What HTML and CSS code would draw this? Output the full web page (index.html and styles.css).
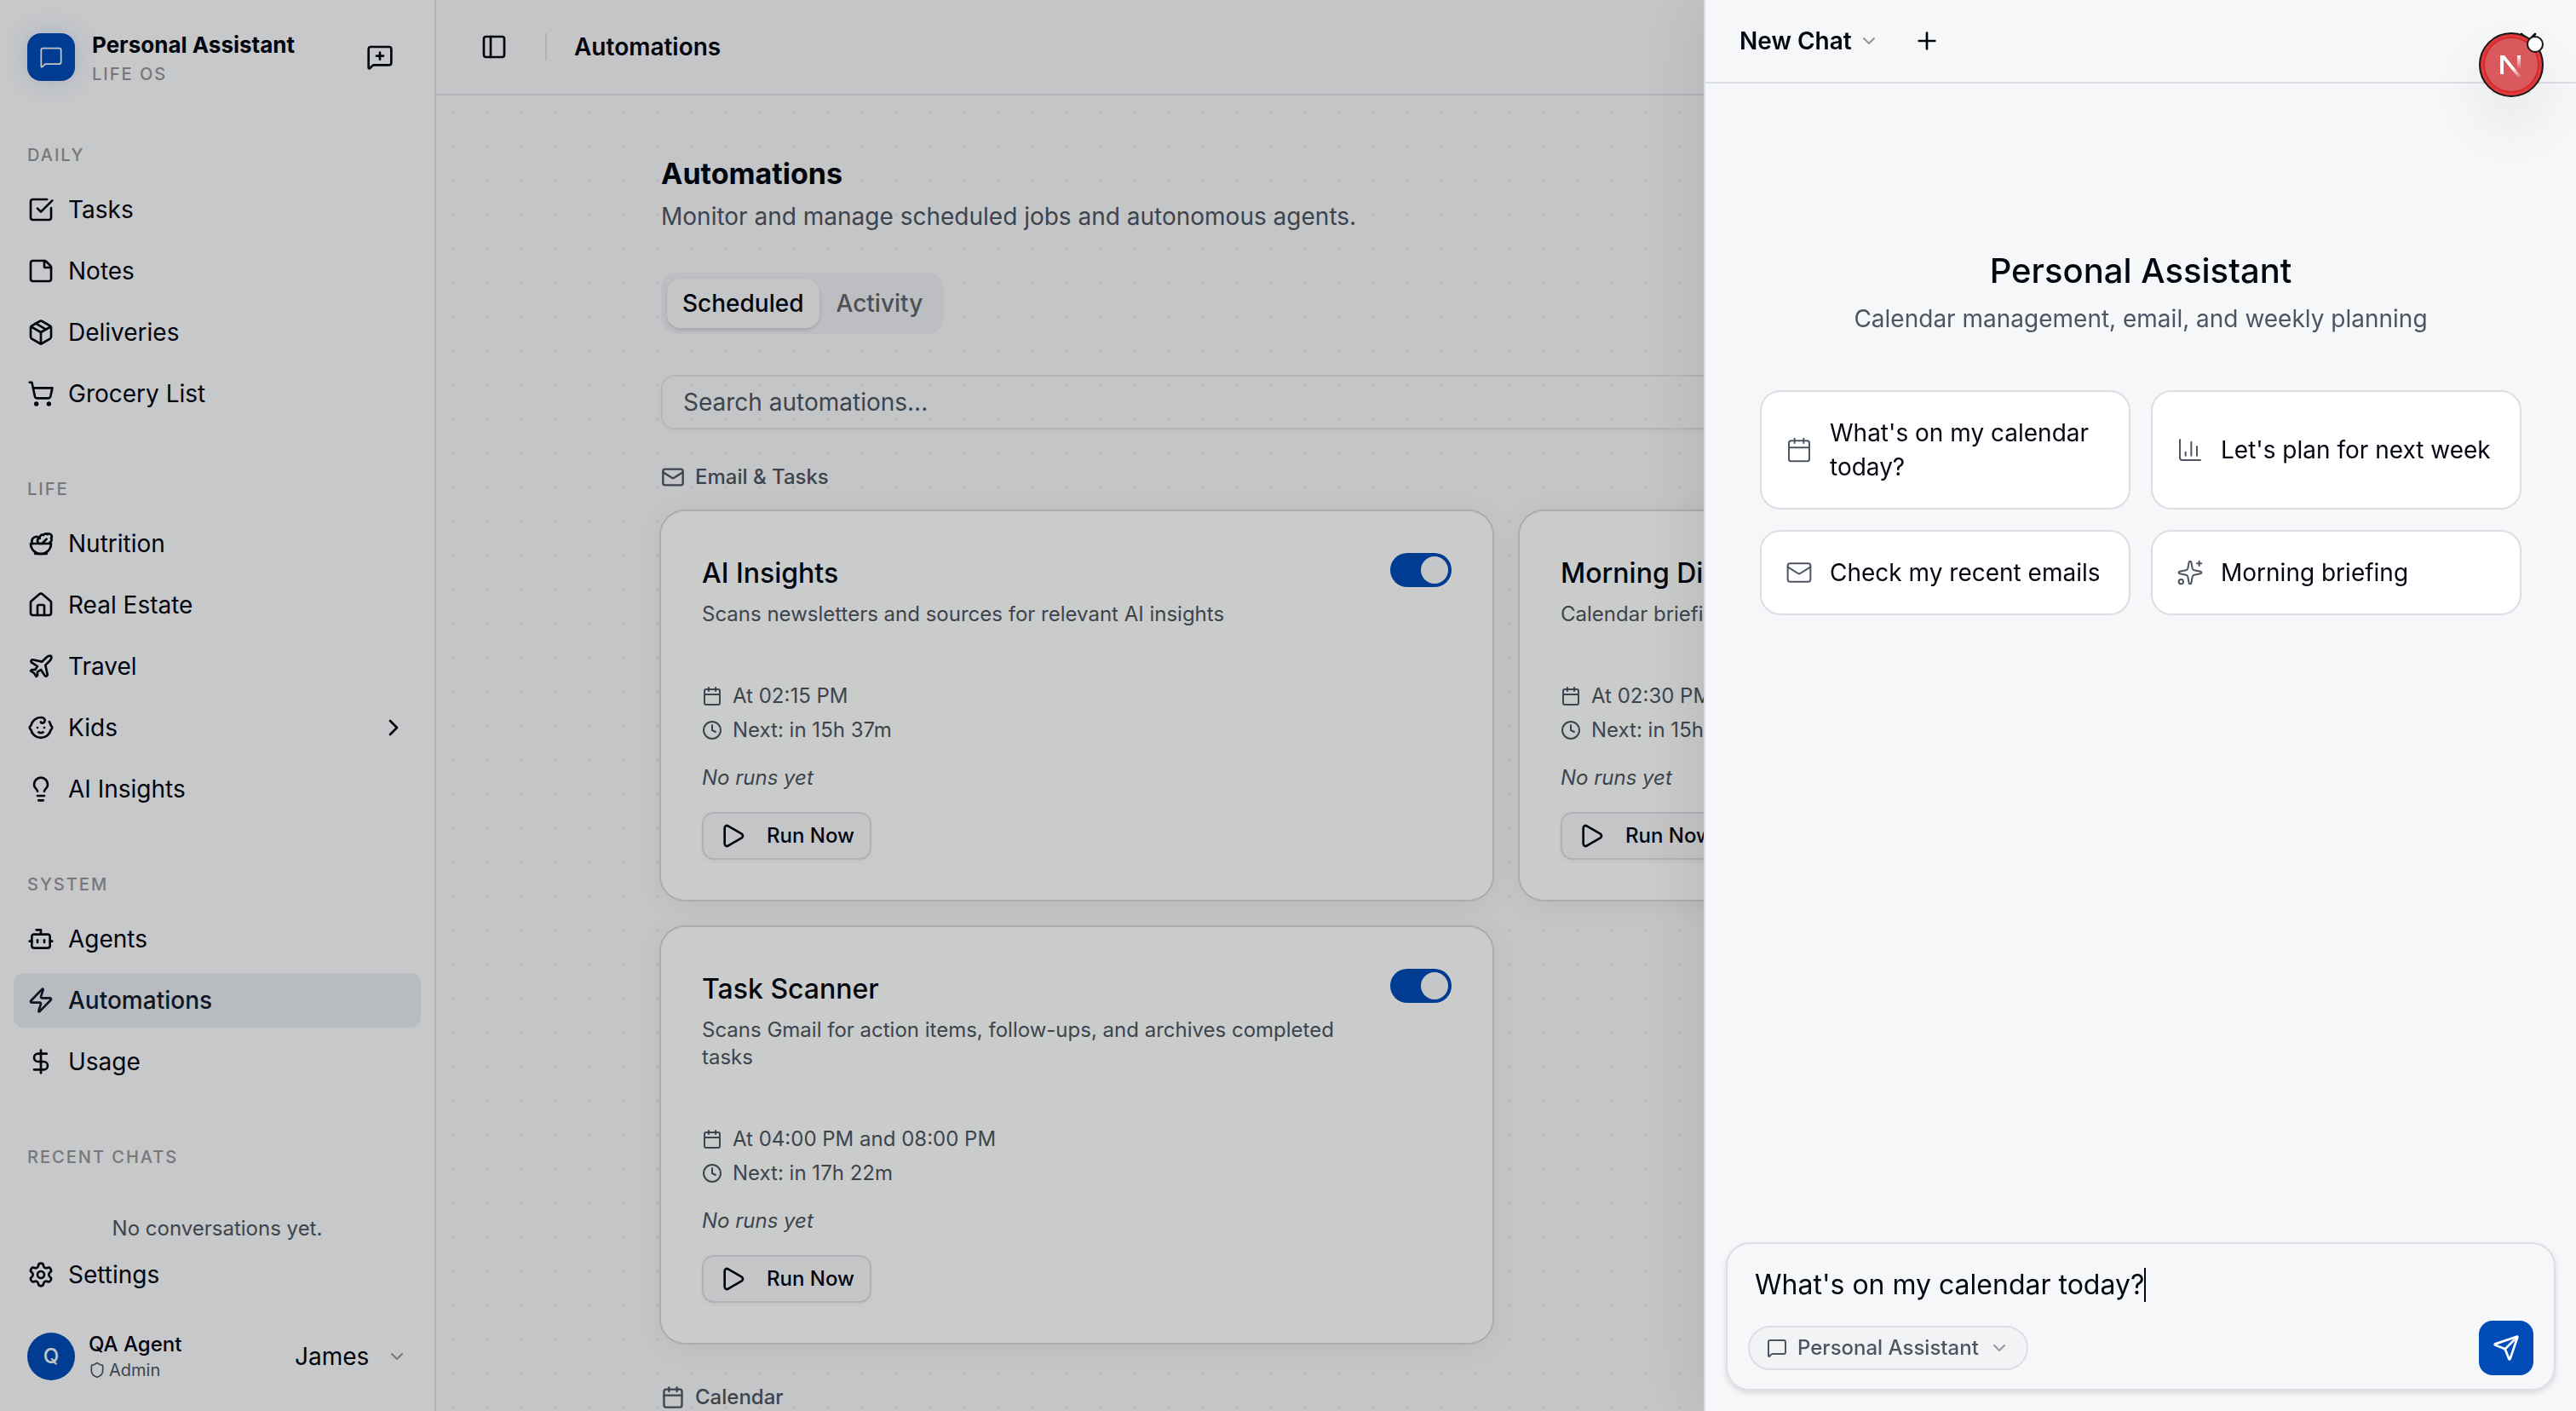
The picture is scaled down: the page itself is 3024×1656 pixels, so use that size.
FILE: index.html
```
<!DOCTYPE html>
<html lang="en">
<head>
    <meta charset="UTF-8">
    <meta name="viewport" content="width=device-width, initial-scale=1.0">
    <title>Automations - Personal Assistant</title>
    <link rel="stylesheet" href="styles.css">
</head>
<body>
    <!-- icon sprite -->
    <svg class="sprite" aria-hidden="true">
        <symbol id="i-message" viewBox="0 0 24 24"><path d="M22 17a2 2 0 0 1-2 2H6.828a2 2 0 0 0-1.414.586l-2.202 2.202A.71.71 0 0 1 2 21.286V5a2 2 0 0 1 2-2h16a2 2 0 0 1 2 2z"/></symbol>
        <symbol id="i-message-plus" viewBox="0 0 24 24"><path d="M22 17a2 2 0 0 1-2 2H6.828a2 2 0 0 0-1.414.586l-2.202 2.202A.71.71 0 0 1 2 21.286V5a2 2 0 0 1 2-2h16a2 2 0 0 1 2 2z"/><path d="M12 8v6"/><path d="M9 11h6"/></symbol>
        <symbol id="i-check" viewBox="0 0 24 24"><path d="M21 10.656V19a2 2 0 0 1-2 2H5a2 2 0 0 1-2-2V5a2 2 0 0 1 2-2h12.344"/><path d="m9 11 3 3L22 4"/></symbol>
        <symbol id="i-note" viewBox="0 0 24 24"><path d="M21 9a2.4 2.4 0 0 0-.706-1.706l-3.588-3.588A2.4 2.4 0 0 0 15 3H5a2 2 0 0 0-2 2v14a2 2 0 0 0 2 2h14a2 2 0 0 0 2-2z"/><path d="M15 3v5a1 1 0 0 0 1 1h5"/></symbol>
        <symbol id="i-package" viewBox="0 0 24 24"><path d="M11 21.73a2 2 0 0 0 2 0l7-4A2 2 0 0 0 21 16V8a2 2 0 0 0-1-1.73l-7-4a2 2 0 0 0-2 0l-7 4A2 2 0 0 0 3 8v8a2 2 0 0 0 1 1.73z"/><path d="M12 22V12"/><path d="M3.29 7 12 12l8.71-5"/><path d="m7.5 4.27 9 5.15"/></symbol>
        <symbol id="i-cart" viewBox="0 0 24 24"><circle cx="8" cy="21" r="1"/><circle cx="19" cy="21" r="1"/><path d="M2.05 2.05h2l2.66 12.42a2 2 0 0 0 2 1.58h9.78a2 2 0 0 0 1.95-1.57l1.65-7.43H5.12"/></symbol>
        <symbol id="i-salad" viewBox="0 0 24 24"><path d="M7 21h10"/><path d="M12 21a9 9 0 0 0 9-9H3a9 9 0 0 0 9 9Z"/><path d="M11.38 12a2.4 2.4 0 0 1-.4-4.77 2.4 2.4 0 0 1 3.2-2.77 2.4 2.4 0 0 1 3.47-.63 2.4 2.4 0 0 1 3.37 3.37 2.4 2.4 0 0 1-1.1 3.7 2.51 2.51 0 0 1 .03 1.1"/><path d="m13 12 4-4"/><path d="M10.9 7.25A3.99 3.99 0 0 0 4 10c0 .73.2 1.41.54 2"/></symbol>
        <symbol id="i-house" viewBox="0 0 24 24"><path d="M15 21v-8a1 1 0 0 0-1-1h-4a1 1 0 0 0-1 1v8"/><path d="M3 10a2 2 0 0 1 .709-1.528l7-5.999a2 2 0 0 1 2.582 0l7 5.999A2 2 0 0 1 21 10v9a2 2 0 0 1-2 2H5a2 2 0 0 1-2-2z"/></symbol>
        <symbol id="i-plane" viewBox="0 0 24 24"><path d="M17.8 19.2 16 11l3.5-3.5C21 6 21.5 4 21 3c-1-.5-3 0-4.5 1.5L13 8 4.8 6.2c-.5-.1-.9.1-1.1.5l-.3.5c-.2.5-.1 1 .3 1.3L9 12l-2 3H4l-1 1 3 2 2 3 1-1v-3l3-2 3.5 5.3c.3.4.8.5 1.3.3l.5-.2c.4-.3.6-.7.5-1.2z"/></symbol>
        <symbol id="i-baby" viewBox="0 0 24 24"><path d="M10 16c.5.3 1.2.5 2 .5s1.5-.2 2-.5"/><path d="M15 12h.01"/><path d="M19.38 6.813A9 9 0 0 1 20.8 10.2a2 2 0 0 1 0 3.6 9 9 0 0 1-17.6 0 2 2 0 0 1 0-3.6A9 9 0 0 1 12 3c2 0 3.5 1.1 3.5 2.5s-.9 2.5-2 2.5c-.8 0-1.5-.4-1.5-1"/><path d="M9 12h.01"/></symbol>
        <symbol id="i-bulb" viewBox="0 0 24 24"><path d="M15 14c.2-1 .7-1.7 1.5-2.5 1-.9 1.5-2.2 1.5-3.5A6 6 0 0 0 6 8c0 1 .2 2.2 1.5 3.5.7.7 1.3 1.5 1.5 2.5"/><path d="M9 18h6"/><path d="M10 22h4"/></symbol>
        <symbol id="i-bot" viewBox="0 0 24 24"><path d="M12 8V4H8"/><rect width="16" height="12" x="4" y="8" rx="2"/><path d="M2 14h2"/><path d="M20 14h2"/><path d="M15 13v2"/><path d="M9 13v2"/></symbol>
        <symbol id="i-zap" viewBox="0 0 24 24"><path d="M4 14a1 1 0 0 1-.78-1.63l9.9-10.2a.5.5 0 0 1 .86.46l-1.92 6.02A1 1 0 0 0 13 10h7a1 1 0 0 1 .78 1.63l-9.9 10.2a.5.5 0 0 1-.86-.46l1.92-6.02A1 1 0 0 0 11 14z"/></symbol>
        <symbol id="i-dollar" viewBox="0 0 24 24"><path d="M12 2v20"/><path d="M17 5H9.5a3.5 3.5 0 0 0 0 7h5a3.5 3.5 0 0 1 0 7H6"/></symbol>
        <symbol id="i-settings" viewBox="0 0 24 24"><path d="M9.671 4.136a2.34 2.34 0 0 1 4.659 0 2.34 2.34 0 0 0 3.319 1.915 2.34 2.34 0 0 1 2.33 4.033 2.34 2.34 0 0 0 0 3.831 2.34 2.34 0 0 1-2.33 4.033 2.34 2.34 0 0 0-3.319 1.915 2.34 2.34 0 0 1-4.659 0 2.34 2.34 0 0 0-3.32-1.915 2.34 2.34 0 0 1-2.33-4.033 2.34 2.34 0 0 0 0-3.831A2.34 2.34 0 0 1 6.35 6.051a2.34 2.34 0 0 0 3.319-1.915"/><circle cx="12" cy="12" r="3"/></symbol>
        <symbol id="i-shield" viewBox="0 0 24 24"><path d="M20 13c0 5-3.5 7.5-7.66 8.95a1 1 0 0 1-.67-.01C7.5 20.5 4 18 4 13V6a1 1 0 0 1 1-1c2 0 4.5-1.2 6.24-2.72a1.17 1.17 0 0 1 1.52 0C14.51 3.81 17 5 19 5a1 1 0 0 1 1 1z"/></symbol>
        <symbol id="i-panel" viewBox="0 0 24 24"><rect width="18" height="18" x="3" y="3" rx="2"/><path d="M9 3v18"/></symbol>
        <symbol id="i-mail" viewBox="0 0 24 24"><path d="m22 7-8.991 5.727a2 2 0 0 1-2.009 0L2 7"/><rect x="2" y="4" width="20" height="16" rx="2"/></symbol>
        <symbol id="i-calendar" viewBox="0 0 24 24"><path d="M8 2v4"/><path d="M16 2v4"/><rect width="18" height="18" x="3" y="4" rx="2"/><path d="M3 10h18"/></symbol>
        <symbol id="i-clock" viewBox="0 0 24 24"><circle cx="12" cy="12" r="10"/><path d="M12 6v6l4 2"/></symbol>
        <symbol id="i-play" viewBox="0 0 24 24"><path d="M5 5a2 2 0 0 1 3.008-1.728l11.997 6.998a2 2 0 0 1 .003 3.458l-12 7A2 2 0 0 1 5 19z"/></symbol>
        <symbol id="i-chart" viewBox="0 0 24 24"><path d="M3 3v16a2 2 0 0 0 2 2h16"/><path d="M18 17V9"/><path d="M13 17V5"/><path d="M8 17v-3"/></symbol>
        <symbol id="i-sparkles" viewBox="0 0 24 24"><path d="M11.017 2.814a1 1 0 0 1 1.966 0l1.051 5.558a2 2 0 0 0 1.594 1.594l5.558 1.051a1 1 0 0 1 0 1.966l-5.558 1.051a2 2 0 0 0-1.594 1.594l-1.051 5.558a1 1 0 0 1-1.966 0l-1.051-5.558a2 2 0 0 0-1.594-1.594l-5.558-1.051a1 1 0 0 1 0-1.966l5.558-1.051a2 2 0 0 0 1.594-1.594z"/><path d="M20 2v4"/><path d="M22 4h-4"/><circle cx="4" cy="20" r="2"/></symbol>
        <symbol id="i-send" viewBox="0 0 24 24"><path d="M14.536 21.686a.5.5 0 0 0 .937-.024l6.5-19a.496.496 0 0 0-.635-.635l-19 6.5a.5.5 0 0 0-.024.937l7.93 3.18a2 2 0 0 1 1.112 1.11z"/><path d="m21.854 2.147-10.94 10.939"/></symbol>
        <symbol id="i-right" viewBox="0 0 24 24"><path d="m9 18 6-6-6-6"/></symbol>
        <symbol id="i-down" viewBox="0 0 24 24"><path d="m6 9 6 6 6-6"/></symbol>
        <symbol id="i-plus" viewBox="0 0 24 24"><path d="M5 12h14"/><path d="M12 5v14"/></symbol>
        <symbol id="i-x" viewBox="0 0 24 24"><path d="M18 6 6 18"/><path d="m6 6 12 12"/></symbol>
    </svg>

    <div class="app">
        <aside class="sidebar">
            <div class="brand">
                <span class="brand-logo"><svg class="icon icon-md thin"><use href="#i-message"/></svg></span>
                <div class="brand-text">
                    <strong>Personal Assistant</strong>
                    <span>LIFE OS</span>
                </div>
                <button class="icon-btn" type="button" aria-label="New chat"><svg class="icon"><use href="#i-message-plus"/></svg></button>
            </div>

            <nav class="nav">
                <div class="nav-group">
                    <h2>DAILY</h2>
                    <a href="#"><svg class="icon"><use href="#i-check"/></svg>Tasks</a>
                    <a href="#"><svg class="icon"><use href="#i-note"/></svg>Notes</a>
                    <a href="#"><svg class="icon"><use href="#i-package"/></svg>Deliveries</a>
                    <a href="#"><svg class="icon"><use href="#i-cart"/></svg>Grocery List</a>
                </div>
                <div class="nav-group">
                    <h2>LIFE</h2>
                    <a href="#"><svg class="icon"><use href="#i-salad"/></svg>Nutrition</a>
                    <a href="#"><svg class="icon"><use href="#i-house"/></svg>Real Estate</a>
                    <a href="#"><svg class="icon"><use href="#i-plane"/></svg>Travel</a>
                    <a href="#"><svg class="icon"><use href="#i-baby"/></svg>Kids<svg class="icon nav-arrow"><use href="#i-right"/></svg></a>
                    <a href="#"><svg class="icon"><use href="#i-bulb"/></svg>AI Insights</a>
                </div>
                <div class="nav-group">
                    <h2>SYSTEM</h2>
                    <a href="#"><svg class="icon"><use href="#i-bot"/></svg>Agents</a>
                    <a href="#" class="active"><svg class="icon"><use href="#i-zap"/></svg>Automations</a>
                    <a href="#"><svg class="icon"><use href="#i-dollar"/></svg>Usage</a>
                </div>
                <div class="nav-group">
                    <h2>RECENT CHATS</h2>
                    <p class="nav-empty">No conversations yet.</p>
                </div>
            </nav>

            <div class="sidebar-footer">
                <a href="#"><svg class="icon"><use href="#i-settings"/></svg>Settings</a>
                <div class="user">
                    <span class="avatar">Q</span>
                    <div class="user-text">
                        <span class="user-name">QA Agent</span>
                        <span class="user-role"><svg class="icon icon-xs"><use href="#i-shield"/></svg>Admin</span>
                    </div>
                    <label class="persona">
                        <select aria-label="Person"><option>James</option></select>
                        <svg class="icon icon-sm muted"><use href="#i-down"/></svg>
                    </label>
                </div>
            </div>
        </aside>

        <main class="main">
            <header class="topbar">
                <button class="icon-btn" type="button" aria-label="Toggle sidebar"><svg class="icon"><use href="#i-panel"/></svg></button>
                <span class="divider"></span>
                <span class="crumb">Automations</span>
            </header>

            <div class="canvas">
                <div class="content">
                    <h1>Automations</h1>
                    <p class="lead">Monitor and manage scheduled jobs and autonomous agents.</p>

                    <div class="tabs" role="tablist">
                        <button type="button" role="tab" aria-selected="true">Scheduled</button>
                        <button type="button" role="tab" aria-selected="false">Activity</button>
                    </div>

                    <input class="search" type="search" placeholder="Search automations..." aria-label="Search automations">

                    <h2 class="section-title"><svg class="icon icon-md"><use href="#i-mail"/></svg>Email &amp; Tasks</h2>
                    <div class="cards">
                        <article class="card">
                            <div class="card-head">
                                <div class="card-text">
                                    <h3>AI Insights</h3>
                                    <p>Scans newsletters and sources for relevant AI insights</p>
                                </div>
                                <input class="switch" type="checkbox" role="switch" aria-label="AI Insights enabled" checked>
                            </div>
                            <ul class="card-meta">
                                <li><svg class="icon icon-sm"><use href="#i-calendar"/></svg>At 02:15 PM</li>
                                <li><svg class="icon icon-sm"><use href="#i-clock"/></svg>Next: in 15h 37m</li>
                            </ul>
                            <p class="card-runs">No runs yet</p>
                            <button class="run-btn" type="button"><svg class="icon"><use href="#i-play"/></svg>Run Now</button>
                        </article>

                        <article class="card">
                            <div class="card-head">
                                <div class="card-text">
                                    <h3>Morning Digest</h3>
                                    <p>Calendar briefing and priorities for the day</p>
                                </div>
                                <input class="switch" type="checkbox" role="switch" aria-label="Morning Digest enabled" checked>
                            </div>
                            <ul class="card-meta">
                                <li><svg class="icon icon-sm"><use href="#i-calendar"/></svg>At 02:30 PM</li>
                                <li><svg class="icon icon-sm"><use href="#i-clock"/></svg>Next: in 15h 52m</li>
                            </ul>
                            <p class="card-runs">No runs yet</p>
                            <button class="run-btn" type="button"><svg class="icon"><use href="#i-play"/></svg>Run Now</button>
                        </article>

                        <article class="card">
                            <div class="card-head">
                                <div class="card-text">
                                    <h3>Task Scanner</h3>
                                    <p>Scans Gmail for action items, follow-ups, and archives completed tasks</p>
                                </div>
                                <input class="switch" type="checkbox" role="switch" aria-label="Task Scanner enabled" checked>
                            </div>
                            <ul class="card-meta">
                                <li><svg class="icon icon-sm"><use href="#i-calendar"/></svg>At 04:00 PM and 08:00 PM</li>
                                <li><svg class="icon icon-sm"><use href="#i-clock"/></svg>Next: in 17h 22m</li>
                            </ul>
                            <p class="card-runs">No runs yet</p>
                            <button class="run-btn" type="button"><svg class="icon"><use href="#i-play"/></svg>Run Now</button>
                        </article>
                    </div>

                    <h2 class="section-title section-next"><svg class="icon icon-md"><use href="#i-calendar"/></svg>Calendar</h2>
                </div>
            </div>
        </main>
    </div>

    <div class="overlay"></div>

    <section class="chat" aria-label="Chat">
        <header class="chat-head">
            <button class="chat-title" type="button">New Chat<svg class="icon icon-sm muted"><use href="#i-down"/></svg></button>
            <button class="icon-btn" type="button" aria-label="Start new chat"><svg class="icon"><use href="#i-plus"/></svg></button>
            <button class="icon-btn chat-close" type="button" aria-label="Close"><svg class="icon"><use href="#i-x"/></svg></button>
        </header>

        <div class="chat-body">
            <h2>Personal Assistant</h2>
            <p>Calendar management, email, and weekly planning</p>
            <div class="prompts">
                <button type="button"><svg class="icon thin"><use href="#i-calendar"/></svg><span>What's on my calendar today?</span></button>
                <button type="button"><svg class="icon thin"><use href="#i-chart"/></svg><span>Let's plan for next week</span></button>
                <button type="button"><svg class="icon thin"><use href="#i-mail"/></svg><span>Check my recent emails</span></button>
                <button type="button"><svg class="icon thin"><use href="#i-sparkles"/></svg><span>Morning briefing</span></button>
            </div>
        </div>

        <form class="composer">
            <div class="composer-line">
                <input type="text" value="What's on my calendar today?" aria-label="Message">
                <span class="caret"></span>
            </div>
            <div class="composer-bar">
                <button class="agent-pill" type="button"><svg class="icon icon-sm"><use href="#i-message"/></svg>Personal Assistant<svg class="icon icon-sm muted"><use href="#i-down"/></svg></button>
                <button class="send" type="button" aria-label="Send"><svg class="icon"><use href="#i-send"/></svg></button>
            </div>
        </form>
    </section>

    <!-- dev tools badge -->
    <button class="dev-badge" type="button" aria-label="Open dev tools">
        <svg viewBox="0 0 40 40" width="40" height="40">
            <defs>
                <linearGradient id="fade-a" x1="22" y1="24" x2="31" y2="36" gradientUnits="userSpaceOnUse"><stop stop-color="#fff"/><stop offset="1" stop-color="#fff" stop-opacity="0"/></linearGradient>
                <linearGradient id="fade-b" x1="0" y1="9" x2="0" y2="25" gradientUnits="userSpaceOnUse"><stop stop-color="#fff"/><stop offset="1" stop-color="#fff" stop-opacity="0"/></linearGradient>
            </defs>
            <path d="M9 31V9" stroke="#fff" stroke-width="4"/>
            <path d="M7 9h5l20 25-3 2z" fill="url(#fade-a)"/>
            <path d="M29 9V25" stroke="url(#fade-b)" stroke-width="4"/>
        </svg>
        <span class="dev-dot"></span>
    </button>
</body>
</html>
```

FILE: styles.css
```
:root{
    --text: #030712;
    --muted: #4d5562;
    --faint: #94969b;
    --line: #dcdee5;
    --bg: #f6f7f9;
    --side: #f9fafc;
    --card: #fdfffe;
    --primary: #024cb8;
}

*{
    box-sizing: border-box;
}

body{
    margin: 0;
    background-color: var(--bg);
    color: var(--text);
    font-family: Inter, "Liberation Sans", sans-serif;
    font-size: 28px;
    line-height: 40px;
    overflow: hidden;
}

h1, h2, h3, p, ul{
    margin: 0;
    padding: 0;
}

a{
    color: inherit;
    text-decoration: none;
}

button, input, select{
    font: inherit;
    color: inherit;
    margin: 0;
    padding: 0;
    border: 0;
    background: none;
}

/* icons */
.sprite{
    display: none;
}

.icon{
    width: 32px;
    height: 32px;
    flex: none;
    fill: none;
    stroke: currentColor;
    stroke-width: 2;
    stroke-linecap: round;
    stroke-linejoin: round;
}

.icon-md{
    width: 28px;
    height: 28px;
}

.icon-sm{
    width: 24px;
    height: 24px;
}

.icon-xs{
    width: 20px;
    height: 20px;
}

.thin{
    stroke-width: 1.5;
}

.muted{
    color: var(--faint);
}

.icon-btn{
    display: flex;
    align-items: center;
    justify-content: center;
    width: 56px;
    height: 56px;
}

/* layout */
.app{
    display: flex;
    height: 100vh;
}

.sidebar{
    display: flex;
    flex-direction: column;
    flex: none;
    width: 512px;
    background-color: var(--side);
    border-right: 2px solid var(--line);
}

.brand{
    display: flex;
    align-items: center;
    gap: 20px;
    height: 134px;
    padding: 0 36px 0 32px;
}

.brand-logo{
    display: flex;
    align-items: center;
    justify-content: center;
    width: 56px;
    height: 56px;
    border-radius: 16px;
    color: #f6f7f9;
    background-color: var(--primary);
    box-shadow: 0 0 32px rgba(2, 76, 184, .16);
}

.brand-text{
    display: flex;
    flex-direction: column;
    flex: 1;
    padding-top: 4px;
}

.brand-text strong{
    font-size: 26px;
    font-weight: 700;
    line-height: 36px;
}

.brand-text span{
    color: var(--faint);
    font-size: 20px;
    font-weight: 500;
    letter-spacing: 2px;
    line-height: 32px;
}

.nav{
    display: flex;
    flex-direction: column;
    flex: 1;
    gap: 48px;
    min-height: 0;
    padding: 16px 16px 0;
}

.nav-group{
    display: flex;
    flex-direction: column;
    gap: 8px;
}

.nav-group h2{
    height: 56px;
    padding: 0 16px;
    color: var(--faint);
    font-size: 20px;
    font-weight: 500;
    letter-spacing: 2px;
    line-height: 64px;
}

.nav-group a, .sidebar-footer a{
    display: flex;
    align-items: center;
    gap: 16px;
    height: 64px;
    padding: 0 16px;
    border-radius: 12px;
}

.nav-group a.active{
    color: #111c2f;
    background-color: #e7ebf1;
    font-weight: 500;
}

.nav-arrow{
    margin-left: auto;
}

.nav-empty{
    padding-top: 32px;
    color: var(--muted);
    font-size: 24px;
    text-align: center;
}

.sidebar-footer{
    display: flex;
    flex-direction: column;
    gap: 20px;
    padding: 0 16px 20px;
}

.user{
    display: flex;
    align-items: center;
    gap: 16px;
    height: 88px;
    padding: 0 16px;
}

.avatar{
    display: flex;
    align-items: center;
    justify-content: center;
    width: 56px;
    height: 56px;
    border-radius: 50%;
    color: #f6f7f9;
    background-color: var(--primary);
    font-size: 24px;
    font-weight: 500;
}

.user-text{
    display: flex;
    flex-direction: column;
    flex: 1;
}

.user-name{
    font-size: 24px;
    font-weight: 500;
    line-height: 32px;
}

.user-role{
    display: flex;
    align-items: center;
    gap: 4px;
    color: var(--muted);
    font-size: 20px;
    line-height: 28px;
}

.persona{
    display: flex;
    align-items: center;
    gap: 20px;
}

.persona select{
    appearance: none;
}

/* main */
.main{
    display: flex;
    flex-direction: column;
    flex: 1;
    min-width: 0;
}

.topbar{
    display: flex;
    align-items: center;
    flex: none;
    gap: 32px;
    height: 112px;
    padding: 0 40px;
    border-bottom: 2px solid var(--line);
}

.divider{
    width: 2px;
    height: 32px;
    background-color: var(--line);
}

.crumb{
    font-weight: 600;
}

.canvas{
    flex: 1;
    min-height: 0;
    overflow: hidden;
    background-image: radial-gradient(circle, #e6e8ec 2px, transparent 2px);
    background-size: 40px 40px;
}

.content{
    max-width: 2048px;
    margin: 0 auto;
    padding: 64px 32px;
}

h1{
    font-size: 34px;
    font-weight: 700;
    line-height: 56px;
}

.lead{
    color: var(--muted);
    line-height: 44px;
}

.tabs{
    display: inline-flex;
    gap: 2px;
    height: 72px;
    margin-top: 44px;
    padding: 7px;
    border-radius: 20px;
    background-color: #eceef2;
}

.tabs button{
    padding: 0 18px;
    border-radius: 16px;
    color: #626469;
    font-weight: 500;
}

.tabs button[aria-selected="true"]{
    color: var(--text);
    background-color: var(--bg);
    box-shadow: 0 2px 4px rgba(0, 0, 0, .14);
}

.search{
    display: block;
    width: 100%;
    height: 64px;
    margin-top: 48px;
    padding: 0 24px;
    border: 2px solid #e3e4e7;
    border-radius: 16px;
    box-shadow: 0 2px 4px rgba(0, 0, 0, .05);
}

.search::placeholder{
    color: var(--muted);
    opacity: 1;
}

.section-title{
    display: flex;
    align-items: center;
    gap: 12px;
    margin: 40px 0 24px;
    color: var(--muted);
    font-size: 24px;
    font-weight: 500;
    line-height: 32px;
}

.section-next{
    margin-top: 48px;
}

.cards{
    display: grid;
    grid-template-columns: 1fr 1fr;
    gap: 32px;
}

.card{
    display: flex;
    flex-direction: column;
    align-items: flex-start;
    padding: 49px 48px 47px;
    border-radius: 28px;
    background-color: var(--card);
    box-shadow: 0 0 0 2px #d6d8dd, 0 4px 32px rgba(0, 0, 0, .07);
    font-size: 24px;
    line-height: 32px;
}

.card-head{
    display: flex;
    align-items: flex-start;
    justify-content: space-between;
    gap: 24px;
    width: 100%;
}

.card h3{
    margin-bottom: 8px;
    font-size: 32px;
    font-weight: 500;
    line-height: 48px;
}

.card p, .card-meta{
    color: var(--muted);
}

/* on/off switch */
.switch{
    display: flex;
    flex: none;
    justify-content: flex-end;
    width: 72px;
    height: 40px;
    padding: 4px;
    border-radius: 20px;
    appearance: none;
    background-color: var(--primary);
}

.switch::before{
    content: "";
    width: 32px;
    height: 32px;
    border-radius: 50%;
    background-color: var(--bg);
}

.card-meta{
    display: flex;
    flex-direction: column;
    gap: 8px;
    margin: 64px 0 24px;
    list-style: none;
}

.card-meta li{
    display: flex;
    align-items: center;
    gap: 12px;
}

.card-runs{
    font-style: italic;
}

.run-btn{
    display: flex;
    align-items: center;
    gap: 24px;
    height: 56px;
    margin-top: 24px;
    padding: 0 18px;
    border: 2px solid var(--line);
    border-radius: 14px;
    background-color: var(--bg);
    box-shadow: 0 2px 4px rgba(0, 0, 0, .06);
    font-weight: 500;
}

.overlay{
    position: fixed;
    inset: 0;
    background-color: rgba(0, 0, 0, .2);
}

/* chat drawer */
.chat{
    position: fixed;
    top: 0;
    right: 0;
    bottom: 0;
    display: flex;
    flex-direction: column;
    width: 1024px;
    padding-bottom: 24px;
    border-left: 2px solid var(--line);
    background-color: var(--bg);
    box-shadow: 0 0 80px rgba(0, 0, 0, .12);
}

.chat-head{
    display: flex;
    align-items: center;
    gap: 28px;
    height: 98px;
    padding: 0 28px 0 40px;
    border-bottom: 2px solid var(--line);
}

.chat-title{
    display: flex;
    align-items: center;
    gap: 8px;
    font-weight: 600;
}

.chat-close{
    margin-left: auto;
}

.chat-body{
    display: flex;
    flex-direction: column;
    align-items: center;
    flex: 1;
    padding: 192px 64px 0;
}

.chat-body h2{
    font-size: 40px;
    font-weight: 500;
    line-height: 56px;
}

.chat-body p{
    margin-top: 8px;
    color: var(--muted);
}

.prompts{
    display: grid;
    grid-template-columns: 1fr 1fr;
    gap: 24px;
    width: 100%;
    margin-top: 64px;
}

.prompts button{
    display: flex;
    align-items: center;
    gap: 20px;
    padding: 28px;
    border: 2px solid var(--line);
    border-radius: 24px;
    background-color: #fff;
    text-align: left;
}

.prompts .icon{
    color: var(--muted);
}

.composer{
    display: flex;
    flex-direction: column;
    gap: 22px;
    margin: 0 24px;
    padding: 28px 24px 16px;
    border: 2px solid var(--line);
    border-radius: 28px;
    box-shadow: 0 3px 6px rgba(0, 0, 0, .12);
}

.composer-line{
    display: flex;
    align-items: center;
    padding-left: 8px;
    font-size: 32px;
}

.composer-line input{
    field-sizing: content;
    height: 40px;
    outline: 0;
}

.caret{
    width: 2px;
    height: 40px;
    background-color: var(--text);
}

.composer-bar{
    display: flex;
    align-items: center;
    justify-content: space-between;
}

.agent-pill{
    display: flex;
    align-items: center;
    gap: 12px;
    height: 52px;
    padding: 0 20px;
    border: 2px solid var(--line);
    border-radius: 26px;
    background-color: #f1f3f5;
    color: var(--muted);
    font-size: 24px;
    font-weight: 500;
}

.send{
    display: flex;
    align-items: center;
    justify-content: center;
    width: 64px;
    height: 64px;
    border-radius: 16px;
    color: #fff;
    background-color: var(--primary);
}

/* floats over the drawer */
.dev-badge{
    position: fixed;
    top: 38px;
    right: 38px;
    display: flex;
    align-items: center;
    justify-content: center;
    width: 76px;
    height: 76px;
    border: 2px solid #171717;
    border-radius: 50%;
    background-color: #d9595c;
    box-shadow: inset 0 0 0 3px #e5383b, inset 0 0 0 5px #cf2b31, 0 32px 64px rgba(0, 0, 0, .08);
}

.dev-badge svg{
    fill: none;
}

.dev-dot{
    position: absolute;
    top: 2px;
    right: -2px;
    width: 20px;
    height: 20px;
    border: 2px solid #171717;
    border-radius: 50%;
    background-color: #fff;
}
```
